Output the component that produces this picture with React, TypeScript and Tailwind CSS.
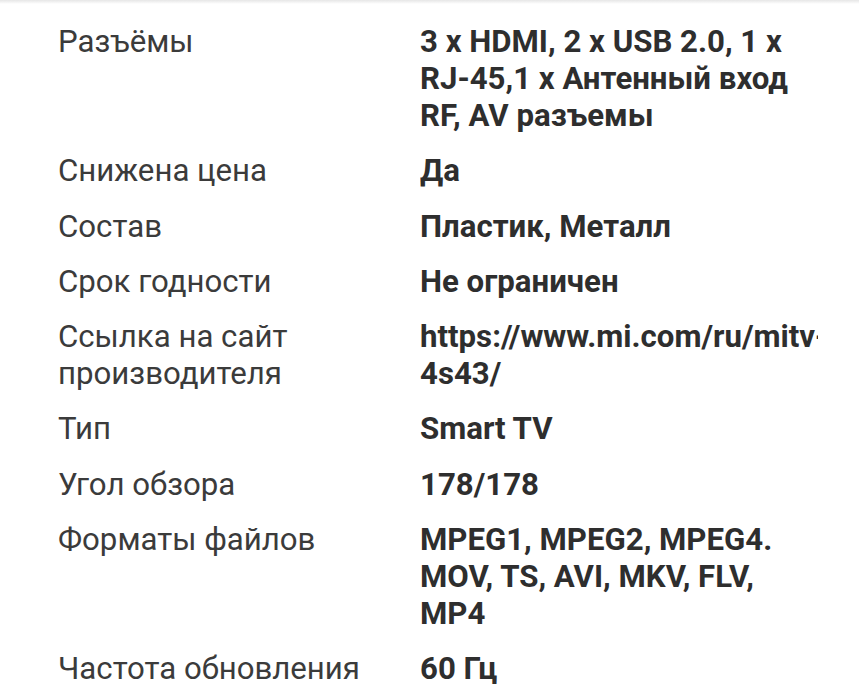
import React from 'react';

interface SpecRow {
  label: string[];
  value: string[];
}

const rows: SpecRow[] = [
  { label: ['Разъёмы'], value: ['3 x HDMI, 2 x USB 2.0, 1 x', 'RJ-45,1 x Антенный вход', 'RF, AV разъемы'] },
  { label: ['Снижена цена'], value: ['Да'] },
  { label: ['Состав'], value: ['Пластик, Металл'] },
  { label: ['Срок годности'], value: ['Не ограничен'] },
  { label: ['Ссылка на сайт', 'производителя'], value: ['https://www.mi.com/ru/mitv-', '4s43/'] },
  { label: ['Тип'], value: ['Smart TV'] },
  { label: ['Угол обзора'], value: ['178/178'] },
  { label: ['Форматы файлов'], value: ['MPEG1, MPEG2, MPEG4.', 'MOV, TS, AVI, MKV, FLV,', 'MP4'] },
  { label: ['Частота обновления'], value: ['60 Гц'] },
];

const App: React.FC = () => {
  return (
    <div className="relative w-[859px] h-[700px] overflow-hidden bg-white font-['Roboto',sans-serif]">
      {/* shadow of the sticky header above */}
      <div className="absolute top-0 left-0 right-0 h-[4px] bg-gradient-to-b from-[#e6e6e6] to-white" />

      <div className="flex flex-col gap-[18.25px] pt-[23px] pl-[58px]">
        {rows.map((row, i) => (
          <div key={i} className="flex text-[31.2px] leading-[37px]">
            <div className="w-[362px] shrink-0 text-[#3b3b3b]">
              {row.label.map((line, j) => (
                <div key={j} className="whitespace-nowrap">{line}</div>
              ))}
            </div>
            {/* the long link is clipped at the column edge, as in the app */}
            <div className="w-[398px] overflow-hidden font-bold text-[#2e2e2e]">
              {row.value.map((line, j) => (
                <div key={j} className="whitespace-nowrap">{line}</div>
              ))}
            </div>
          </div>
        ))}
      </div>
    </div>
  );
};

export default App;
